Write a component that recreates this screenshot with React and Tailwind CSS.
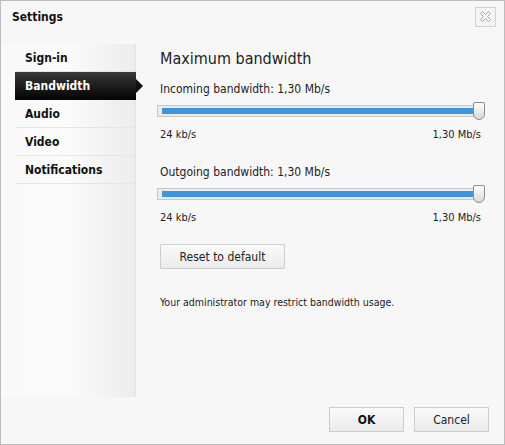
import React from 'react';

const font = { fontFamily: '"DejaVu Sans Condensed", "DejaVu Sans", Tahoma, sans-serif' };

function Slider({ label }) {
  return (
    <div>
      <div className="text-[12px] text-[#222] leading-none h-[14px]">{label}</div>
      <div className="relative mt-[7px] h-[14px] mr-[26px]">
        <div className="absolute left-[-3px] right-[-4px] top-[1px] h-[12px] border border-[#c6c6c6] bg-[#ececec]" />
        <div className="absolute left-[2px] right-[4px] top-[4px] h-[6px] bg-[#3d95e0]" />
        <div className="absolute right-[-7px] top-[-2px] w-[12px] h-[18px] border border-[#8d8d8d] rounded-b-[6px] rounded-t-[2px] bg-gradient-to-b from-white to-[#d8d8d8]" />
      </div>
      <div className="flex justify-between mt-[11px] mr-[26px] text-[11px] text-[#222] leading-none">
        <span>24 kb/s</span>
        <span className="mr-[-3px]">1,30 Mb/s</span>
      </div>
    </div>
  );
}

export default function App() {
  const items = ['Sign-in', 'Bandwidth', 'Audio', 'Video', 'Notifications'];
  return (
    <div style={font} className="w-[505px] h-[445px] bg-[#f7f7f7] border border-[#bdbdbd] relative overflow-hidden">
      {/* Title bar */}
      <div className="flex items-center justify-between h-[30px] pl-[11px] pr-[8px]">
        <span className="text-[12px] font-bold text-[#111] mt-[1px]">Settings</span>
        <div className="w-[21px] h-[20px] border border-[#d2d2d2] bg-[#f4f4f4] flex items-center justify-center mt-[1px]">
          <svg width="13" height="13" viewBox="0 0 13 13" fill="none" stroke="#a8a8a8" strokeWidth="1">
            <path d="M1.5 3.5 L3.5 1.5 L6.5 4.5 L9.5 1.5 L11.5 3.5 L8.5 6.5 L11.5 9.5 L9.5 11.5 L6.5 8.5 L3.5 11.5 L1.5 9.5 L4.5 6.5 Z" />
          </svg>
        </div>
      </div>

      <div className="flex mt-[13px]">
        {/* Sidebar */}
        <div className="w-[135px] h-[353px] pl-[14px] bg-gradient-to-r from-[#f9f9f9] via-[#fbfbfb] to-[#ececec] border-r border-[#e2e2e2]">
          {items.map((it) => {
            const active = it === 'Bandwidth';
            return (
              <div
                key={it}
                className={
                  active
                    ? 'relative h-[28px] flex items-center pl-[10px] text-white font-bold text-[12px] bg-gradient-to-b from-[#3a3a3a] to-[#050505] mr-[-1px]'
                    : 'h-[28px] flex items-center pl-[10px] text-[#111] font-bold text-[12px] border-b border-[#e6e6e6]'
                }
              >
                {it}
                {active && (
                  <span className="absolute right-[-7px] top-[7px] w-0 h-0 border-y-[7px] border-y-transparent border-l-[7px] border-l-[#111]" />
                )}
              </div>
            );
          })}
        </div>

        {/* Content */}
        <div className="flex-1 pl-[24px] pt-[7px]">
          <div className="text-[16px] text-[#222] leading-none h-[16px]">Maximum bandwidth</div>
          <div className="mt-[16px]">
            <Slider label="Incoming bandwidth: 1,30 Mb/s" />
          </div>
          <div className="mt-[26px]">
            <Slider label="Outgoing bandwidth: 1,30 Mb/s" />
          </div>
          <button className="mt-[21px] h-[25px] w-[125px] border border-[#cdcdcd] bg-gradient-to-b from-[#fafafa] to-[#ebebeb] text-[12px] text-[#222] rounded-[1px]">
            Reset to default
          </button>
          <div className="mt-[28px] text-[10.5px] text-[#222] leading-none">Your administrator may restrict bandwidth usage.</div>
        </div>
      </div>

      {/* Footer */}
      <div className="absolute right-[15px] bottom-[12px] flex gap-[10px]">
        <button className="w-[75px] h-[25px] border border-[#cdcdcd] bg-gradient-to-b from-[#fafafa] to-[#ebebeb] text-[12px] font-bold text-[#111]">OK</button>
        <button className="w-[75px] h-[25px] border border-[#cdcdcd] bg-gradient-to-b from-[#fafafa] to-[#ebebeb] text-[12px] text-[#222]">Cancel</button>
      </div>
    </div>
  );
}
